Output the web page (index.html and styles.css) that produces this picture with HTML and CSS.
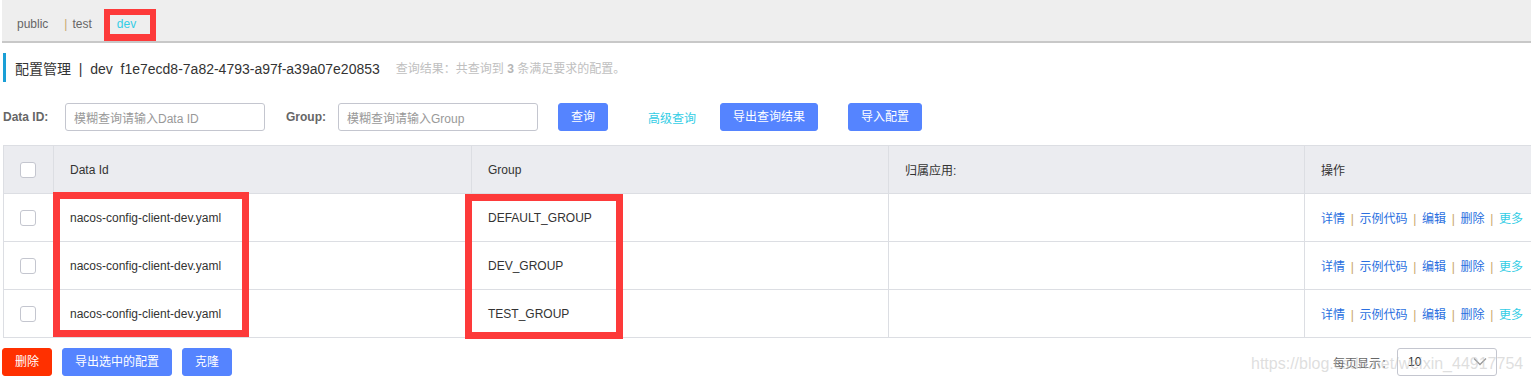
FILE: index.html
```html
<!DOCTYPE html>
<html>
<head>
<meta charset="utf-8">
<link rel="stylesheet" href="styles.css">
</head>
<body>
<div class="page">
  <div class="topbar">
    <span class="ns">public</span>
    <span class="ns-sep">|</span>
    <span class="ns">test</span>
    <span class="ns ns-active">dev</span>
  </div>

  <div class="title">
    <span class="title-main">配置管理&nbsp;&nbsp;|&nbsp;&nbsp;dev&nbsp;&nbsp;f1e7ecd8-7a82-4793-a97f-a39a07e20853</span>
    <span class="title-result">查询结果：共查询到 <b>3</b> 条满足要求的配置。</span>
  </div>

  <div class="search">
    <label class="lbl">Data ID:</label>
    <div class="input"><span class="ph">模糊查询请输入Data ID</span></div>
    <label class="lbl lbl-group">Group:</label>
    <div class="input"><span class="ph">模糊查询请输入Group</span></div>
    <button class="btn btn-query">查询</button>
    <a class="adv">高级查询</a>
    <button class="btn btn-export">导出查询结果</button>
    <button class="btn btn-import">导入配置</button>
  </div>

  <div class="table-wrap">
    <table class="tbl">
      <colgroup>
        <col class="c-check"><col class="c-id"><col class="c-group"><col class="c-app"><col class="c-op">
      </colgroup>
      <thead>
        <tr>
          <th class="chk"><span class="box"></span></th>
          <th>Data Id</th>
          <th>Group</th>
          <th>归属应用:</th>
          <th>操作</th>
        </tr>
      </thead>
      <tbody>
        <tr>
          <td class="chk"><span class="box"></span></td>
          <td>nacos-config-client-dev.yaml</td>
          <td>DEFAULT_GROUP</td>
          <td></td>
          <td class="ops"><a>详情</a><i>|</i><a>示例代码</a><i>|</i><a>编辑</a><i>|</i><a>删除</a><i>|</i><a class="more">更多</a></td>
        </tr>
        <tr>
          <td class="chk"><span class="box"></span></td>
          <td>nacos-config-client-dev.yaml</td>
          <td>DEV_GROUP</td>
          <td></td>
          <td class="ops"><a>详情</a><i>|</i><a>示例代码</a><i>|</i><a>编辑</a><i>|</i><a>删除</a><i>|</i><a class="more">更多</a></td>
        </tr>
        <tr>
          <td class="chk"><span class="box"></span></td>
          <td>nacos-config-client-dev.yaml</td>
          <td>TEST_GROUP</td>
          <td></td>
          <td class="ops"><a>详情</a><i>|</i><a>示例代码</a><i>|</i><a>编辑</a><i>|</i><a>删除</a><i>|</i><a class="more">更多</a></td>
        </tr>
      </tbody>
    </table>
    <div class="hl hl-id"></div>
    <div class="hl hl-group"></div>
  </div>

  <div class="footer">
    <div class="footer-left">
      <button class="btn btn-danger">删除</button>
      <button class="btn btn-export-sel">导出选中的配置</button>
      <button class="btn btn-clone">克隆</button>
    </div>
    <div class="footer-right">
      <span class="per">每页显示：</span>
      <div class="select"><span>10</span>
        <svg class="chev" width="14" height="10" viewBox="0 0 14 10"><path d="M1 1.5 L7 7.5 L13 1.5" fill="none" stroke="#999" stroke-width="1.3"/></svg>
      </div>
    </div>
  </div>

  <div class="tab-hl"></div>
  <div class="watermark">https://blog.csdn.net/weixin_44917754</div>
</div>
</body>
</html>
```

FILE: styles.css
```css
html, body {
  margin: 0;
  padding: 0;
  background: #fff;
  overflow: hidden;
}
body {
  font-family: "Liberation Sans", "Noto Sans CJK SC", sans-serif;
  font-size: 12px;
  color: #333;
}
.page {
  position: relative;
  width: 1531px;
  height: 385px;
  overflow: hidden;
}

/* top namespace bar */
.topbar {
  margin-left: 2px;
  background: #eeeeee;
  border-bottom: 2px solid #c8c8c8;
  display: flex;
  align-items: center;
  padding-left: 15px;
  padding-top: 6px;
  box-sizing: border-box;
  height: 43px;
}
.ns {
  color: #666;
  font-size: 12px;
}
.ns-sep {
  color: #c9a66b;
  margin-left: 16px;
  margin-right: 5px;
}
.ns-active {
  color: #33cde5;
  margin-left: 25px;
}
.tab-hl {
  position: absolute;
  left: 104px;
  top: 9px;
  width: 52px;
  height: 32px;
  box-sizing: border-box;
  border: 6px solid #fd3a3a;
  border-bottom-width: 7px;
}

/* title */
.title {
  margin-top: 10px;
  margin-left: 3px;
  height: 29px;
  border-left: 3px solid #1a9fd6;
  display: flex;
  align-items: center;
  padding-left: 9px;
}
.title-main {
  font-size: 14px;
  color: #333;
}
.title-result {
  margin-left: 16px;
  font-size: 12px;
  color: #c0c0c0;
}
.title-result b {
  color: #b5b5b5;
}

/* search row */
.search {
  margin-top: 21px;
  margin-left: 3px;
  height: 28px;
  display: flex;
  align-items: center;
}
.lbl {
  font-weight: bold;
  color: #666;
  font-size: 12px;
  width: 62px;
}
.lbl-group {
  width: 52px;
  margin-left: 21px;
}
.input {
  width: 200px;
  height: 28px;
  box-sizing: border-box;
  border: 1px solid #c4c6cf;
  border-radius: 3px;
  display: flex;
  align-items: center;
  padding-left: 8px;
}
.ph {
  color: #999;
  font-size: 12px;
}
.btn {
  height: 28px;
  box-sizing: border-box;
  border: 1px solid #5584ff;
  background: #5584ff;
  color: #fff;
  border-radius: 3px;
  padding: 0;
  font-family: "Liberation Sans", "Noto Sans CJK SC", sans-serif;
  font-size: 12px;
  line-height: 26px;
  cursor: pointer;
}
.btn-query {
  margin-left: 20px;
  width: 50px;
}
.adv {
  color: #33cde5;
  margin-left: 40px;
  margin-right: 24px;
  font-size: 12px;
}
.btn-export {
  width: 98px;
}
.btn-import {
  margin-left: 30px;
  width: 74px;
}

/* table */
.table-wrap {
  position: relative;
  margin-top: 14px;
  margin-left: 3px;
  width: 1560px;
}
.tbl {
  border-collapse: collapse;
  table-layout: fixed;
  width: 1560px;
}
.c-check { width: 50px; }
.c-id { width: 418px; }
.c-group { width: 417px; }
.c-app { width: 416px; }
.c-op { width: 259px; }
.tbl th, .tbl td {
  border: 1px solid #dcdee3;
  text-align: left;
  padding: 0 0 0 16px;
  font-weight: normal;
  font-size: 12px;
  color: #333;
  white-space: nowrap;
}
.tbl th {
  background: #ebecf0;
  height: 47px;
}
.tbl td {
  height: 47px;
  background: #fff;
}
.box {
  display: block;
  width: 16px;
  height: 16px;
  box-sizing: border-box;
  border: 1px solid #c4c6cf;
  border-radius: 3px;
  background: #fff;
}
.ops a {
  color: #2a6fe0;
}
.ops a.more {
  color: #33cde5;
}
.ops i {
  font-style: normal;
  color: #c9a66b;
  margin: 0 5.7px;
}
.hl {
  position: absolute;
  border: 7px solid #fd3a3a;
  box-sizing: border-box;
}
.hl-id {
  left: 50px;
  top: 47px;
  width: 196px;
  height: 145px;
}
.hl-group {
  left: 462px;
  top: 49px;
  width: 158px;
  height: 145px;
}

/* footer */
.footer {
  margin-top: 10px;
  display: flex;
  justify-content: space-between;
  align-items: center;
  height: 28px;
  padding-left: 2px;
}
.footer-left {
  display: flex;
  gap: 10px;
}
.btn-danger {
  background: #ff3000;
  border-color: #ff3000;
  width: 50px;
}
.btn-export-sel {
  width: 110px;
}
.btn-clone {
  width: 50px;
}
.footer-right {
  display: flex;
  align-items: center;
  margin-right: 34px;
}
.per {
  color: #666;
  font-size: 12px;
  margin-right: 4px;
}
.select {
  width: 100px;
  height: 28px;
  box-sizing: border-box;
  border: 1px solid #c4c6cf;
  border-radius: 3px;
  display: flex;
  align-items: center;
  justify-content: space-between;
  padding: 0 9px 0 10px;
  font-size: 12px;
  color: #333;
}
.chev {
  display: block;
}
.watermark {
  position: absolute;
  left: 1251px;
  top: 355px;
  font-family: "Liberation Sans", sans-serif;
  font-size: 16px;
  color: rgba(190, 190, 190, 0.5);
  white-space: nowrap;
  pointer-events: none;
}
```
